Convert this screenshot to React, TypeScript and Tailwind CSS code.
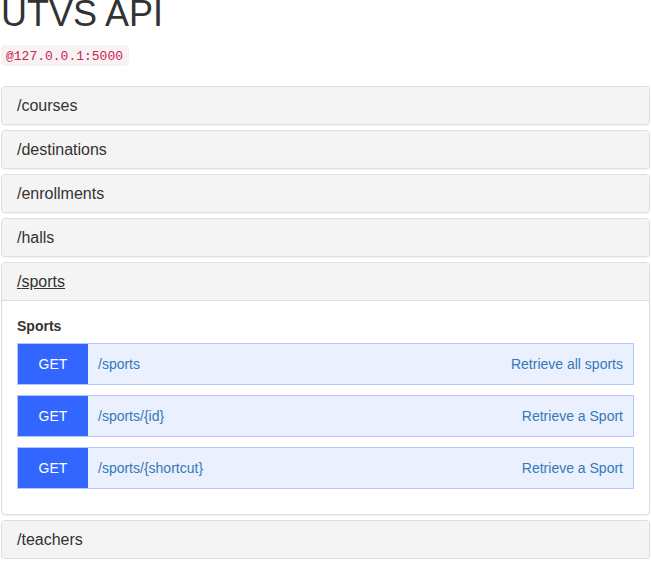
type Operation = { method: string; path: string; summary: string };
type Resource = { name: string; title?: string; operations?: Operation[] };

const resources: Resource[] = [
  { name: "courses" },
  { name: "destinations" },
  { name: "enrollments" },
  { name: "halls" },
  {
    name: "sports",
    title: "Sports",
    operations: [
      { method: "GET", path: "/sports", summary: "Retrieve all sports" },
      { method: "GET", path: "/sports/{id}", summary: "Retrieve a Sport" },
      { method: "GET", path: "/sports/{shortcut}", summary: "Retrieve a Sport" },
    ],
  },
  { name: "teachers" },
];

function OperationRow({ method, path, summary }: Operation) {
  return (
    <li>
      <a
        href={"#" + path}
        className="flex h-[42px] items-stretch border border-[#b3c6ff] bg-[#eaf0fe] text-sm leading-5 text-[#337ab7]"
      >
        <span className="flex w-[70px] items-center justify-center bg-[#3366ff] text-white">{method}</span>
        <span className="flex flex-1 items-center justify-between px-2.5">
          <span>{path}</span>
          <span>{summary}</span>
        </span>
      </a>
    </li>
  );
}

function Panel({ name, title, operations }: Resource) {
  return (
    <section className="overflow-hidden rounded border border-[#dddddd] bg-white shadow-[0_1px_1px_rgba(0,0,0,0.05)]">
      <h2 className="bg-[#f4f4f4] px-[15px] py-2.5 text-base leading-[17px]">
        <a href={"#" + name} className={operations ? "underline" : "hover:underline"}>
          /{name}
        </a>
      </h2>
      {operations && (
        <div className="border-t border-[#dddddd] px-[15px] pt-[15px] pb-[25px]">
          <h3 className="text-sm leading-5 font-bold">{title}</h3>
          <ul className="mt-[7px] flex flex-col gap-2.5">
            {operations.map((op) => (
              <OperationRow key={op.path} {...op} />
            ))}
          </ul>
        </div>
      )}
    </section>
  );
}

export default function App() {
  return (
    <main className="bg-white px-px font-['Liberation_Sans',Arial,sans-serif] text-[#333333]">
      <h1 className="text-4xl leading-7">UTVS API</h1>
      <div className="mt-[17px] flex">
        <code className="rounded bg-[#f9f2f4] pt-[3px] pr-1.5 pb-px pl-[5px] font-['Liberation_Mono',monospace] text-[13px] leading-[17px] text-[#c7254e]">
          @127.0.0.1:5000
        </code>
      </div>
      <div className="mt-5 flex flex-col gap-[5px]">
        {resources.map((resource) => (
          <Panel key={resource.name} {...resource} />
        ))}
      </div>
    </main>
  );
}
